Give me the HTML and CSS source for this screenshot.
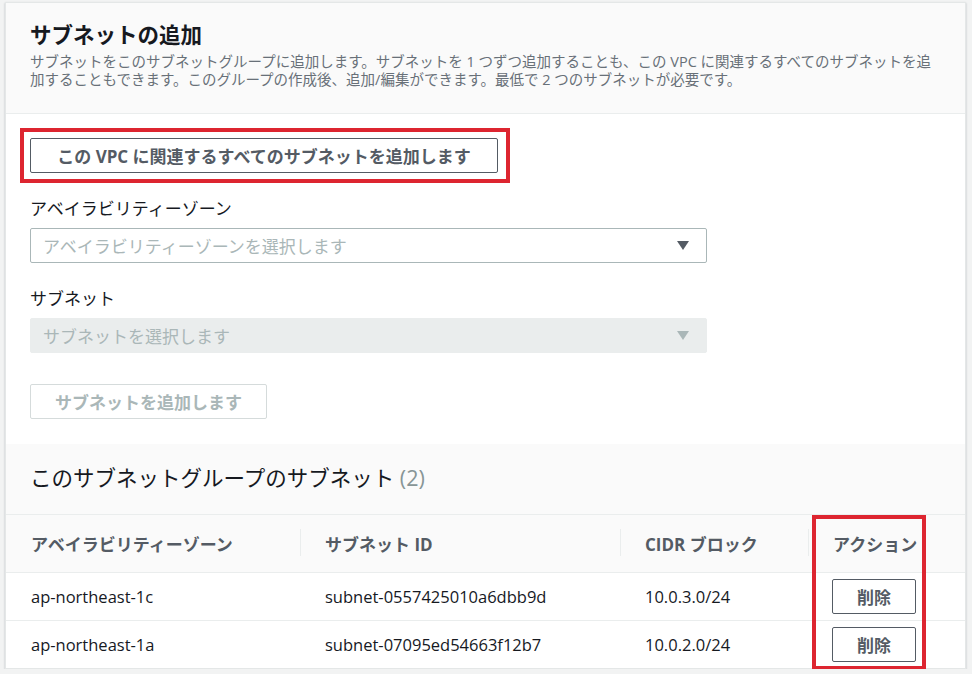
FILE: index.html
```html
<!DOCTYPE html>
<html lang="ja">
<head>
    <meta charset="UTF-8">
    <title>サブネットの追加</title>
    <link rel="stylesheet" href="styles.css">
</head>
<body>
    <div class="panel">
        <div class="panel-header">
            <h2 class="panel-title">サブネットの追加</h2>
            <p class="panel-desc">サブネットをこのサブネットグループに追加します。サブネットを 1 つずつ追加することも、この VPC に関連するすべてのサブネットを追<br>加することもできます。このグループの作成後、追加/編集ができます。最低で 2 つのサブネットが必要です。</p>
        </div>

        <div class="panel-body">
            <div class="highlight">
                <button class="btn btn-wide">この VPC に関連するすべてのサブネットを追加します</button>
            </div>

            <div class="field">
                <div class="field-label">アベイラビリティーゾーン</div>
                <div class="select">
                    <span>アベイラビリティーゾーンを選択します</span>
                    <svg class="caret" viewBox="0 0 12 9"><path d="M0 0 H12 L6 9 Z"/></svg>
                </div>
            </div>

            <div class="field">
                <div class="field-label">サブネット</div>
                <div class="select select-disabled">
                    <span>サブネットを選択します</span>
                    <svg class="caret" viewBox="0 0 12 9"><path d="M0 0 H12 L6 9 Z"/></svg>
                </div>
            </div>

            <button class="btn btn-disabled">サブネットを追加します</button>
        </div>

        <div class="table-title">
            このサブネットグループのサブネット <span class="count">(2)</span>
        </div>

        <div class="subnet-table">
            <div class="th">アベイラビリティーゾーン</div>
            <div class="th sep">サブネット ID</div>
            <div class="th sep">CIDR ブロック</div>
            <div class="th sep">アクション</div>

            <div class="td">ap-northeast-1c</div>
            <div class="td">subnet-0557425010a6dbb9d</div>
            <div class="td">10.0.3.0/24</div>
            <div class="td"><button class="btn btn-small">削除</button></div>

            <div class="td last">ap-northeast-1a</div>
            <div class="td last">subnet-07095ed54663f12b7</div>
            <div class="td last">10.0.2.0/24</div>
            <div class="td last"><button class="btn btn-small">削除</button></div>

            <div class="action-mark"></div>
        </div>
    </div>
</body>
</html>
```

FILE: styles.css
```css
body {
    margin: 0;
    background: #f2f3f3;
    font-family: "Open Sans", "Noto Sans CJK JP", sans-serif;
    color: #16191f;
}

.panel {
    margin: 2px 6px 0 5px;
    background: #fff;
    border: 1px solid #e4e7e7;
    box-shadow: 0 1px 2px rgba(0, 22, 40, 0.25);
}

.panel-header {
    padding: 17px 24px 24px;
    background: #fafafa;
    border-bottom: 1px solid #eaeded;
}

.panel-title {
    margin: 0;
    font-size: 21.5px;
    line-height: 30px;
    font-weight: 700;
}

.panel-desc {
    margin: 3px 0 0;
    font-size: 14.5px;
    line-height: 18px;
    color: #687078;
}

.panel-body {
    padding: 14px 24px 25px;
}

.highlight {
    display: inline-block;
    margin-left: -10px;
    padding: 6px 8px 6px 6px;
    border: 4px solid #dd2530;
}

.btn {
    display: block;
    height: 35px;
    padding: 0 20px;
    background: #fff;
    border: 1px solid #545b64;
    border-radius: 2px;
    font-family: inherit;
    font-size: 17px;
    font-weight: 700;
    color: #545b64;
}

.btn-wide {
    width: 468px;
}

.btn-disabled {
    width: 237px;
    margin-top: 31px;
    border-color: #d5dbdb;
    color: #aab7b8;
}

.field {
    margin-top: 15px;
}

.field + .field {
    margin-top: 25px;
}

.field-label {
    font-size: 17px;
    line-height: 22px;
    margin-bottom: 8px;
}

.select {
    width: 677px;
    height: 35px;
    box-sizing: border-box;
    display: flex;
    align-items: center;
    justify-content: space-between;
    padding: 0 17px 0 12px;
    border: 1px solid #aab7b8;
    border-radius: 2px;
    font-size: 17px;
    color: #aab7b8;
}

.select-disabled {
    background: #eaeded;
    border-color: #eaeded;
}

.caret {
    width: 12px;
    height: 9px;
    fill: #545b64;
}

.select-disabled .caret {
    fill: #aab7b8;
}

.table-title {
    padding: 19px 24px 21px;
    background: #fafafa;
    border-bottom: 1px solid #eaeded;
    font-size: 21.5px;
    line-height: 30px;
}

.count {
    color: #879596;
}

.subnet-table {
    position: relative;
    display: grid;
    grid-template-columns: 294px 320px 188px 1fr;
}

.th, .td {
    display: flex;
    align-items: center;
    padding-left: 25px;
    font-size: 16.5px;
}

.th {
    position: relative;
    height: 57px;
    background: #fafafa;
    border-bottom: 1px solid #eaeded;
    font-size: 17px;
    font-weight: 700;
    color: #545b64;
}

.th.sep::before {
    content: '';
    position: absolute;
    left: 0;
    top: 14px;
    height: 27px;
    border-left: 1px solid #eaeded;
}

.td {
    height: 47px;
    border-bottom: 1px solid #eaeded;
}

.td.last {
    border-bottom: none;
}

.td:nth-child(4n) {
    padding-left: 24px;
}

.btn-small {
    width: 84px;
    padding: 0;
}

.action-mark {
    position: absolute;
    left: 806px;
    top: 0;
    width: 106px;
    bottom: -2px;
    border: 4px solid #dd2530;
}
```
